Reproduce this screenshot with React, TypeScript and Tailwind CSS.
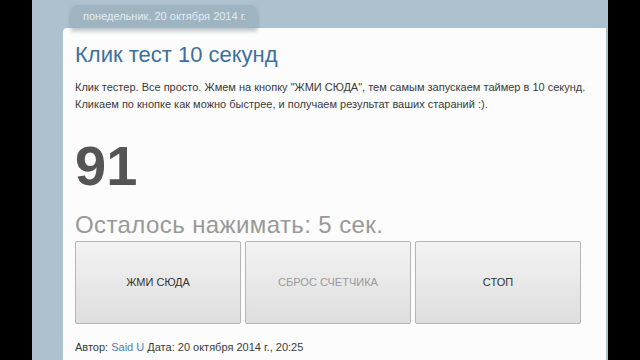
import React from "react";

export default function App() {
  const font = { fontFamily: '"Liberation Sans", Arial, sans-serif' };
  const btn =
    "w-[166px] h-[83px] shrink-0 rounded-[2px] border border-[#b5b5b5] bg-gradient-to-b from-[#f3f3f3] to-[#dedede] flex items-center justify-center text-[11px]";
  return (
    <div className="w-[640px] h-[360px] bg-black flex overflow-hidden" style={font}>
      <div className="w-[32px] shrink-0 bg-black" />
      <div className="w-[576px] shrink-0 bg-[#adc2ce] flex flex-col pl-[31px] pr-[2px] pt-[5px] overflow-hidden">
        <div className="shrink-0 ml-[8px] w-[186px] h-[23px] bg-[#9fb4c1] rounded-t-[7px] shadow-[0_3px_4px_rgba(60,80,95,0.35)] flex items-center pl-[12px] text-[11px] text-[#e4ecf1] relative z-10">
          понедельник, 20 октября 2014 г.
        </div>
        <div className="flex-1 bg-[#fbfcfb] rounded-tl-[4px] pl-[12px] pr-[20px] pt-[13px] text-[#333]">
          <h1 className="text-[22px] leading-[28px] text-[#3d6f9f] whitespace-nowrap">Клик тест 10 секунд</h1>
          <p className="mt-[10px] text-[11px] leading-[17px] text-[#3a3a3a] whitespace-nowrap">
            Клик тестер. Все просто. Жмем на кнопку "ЖМИ СЮДА", тем самым запускаем таймер в 10 секунд.
            <br />
            Кликаем по кнопке как можно быстрее, и получаем результат ваших стараний :).
          </p>
          <div className="mt-[23px] text-[56px] leading-[60px] font-bold text-[#555]">91</div>
          <div className="mt-[15px] text-[24px] leading-[28px] tracking-[0.4px] text-[#999] whitespace-nowrap">
            Осталось нажимать: 5 сек.
          </div>
          <div className="mt-[2px] flex gap-[4px]">
            <div className={btn + " text-[#333]"}>ЖМИ СЮДА</div>
            <div className={btn + " text-[#999]"}>СБРОС СЧЕТЧИКА</div>
            <div className={btn + " text-[#333]"}>СТОП</div>
          </div>
          <div className="mt-[16px] text-[11px] leading-[14px] text-[#3a3a3a] whitespace-nowrap">
            Автор: <span className="text-[#4b7fb3]">Said U</span> Дата: 20 октября 2014 г., 20:25
          </div>
        </div>
      </div>
      <div className="w-[32px] shrink-0 bg-black" />
    </div>
  );
}
